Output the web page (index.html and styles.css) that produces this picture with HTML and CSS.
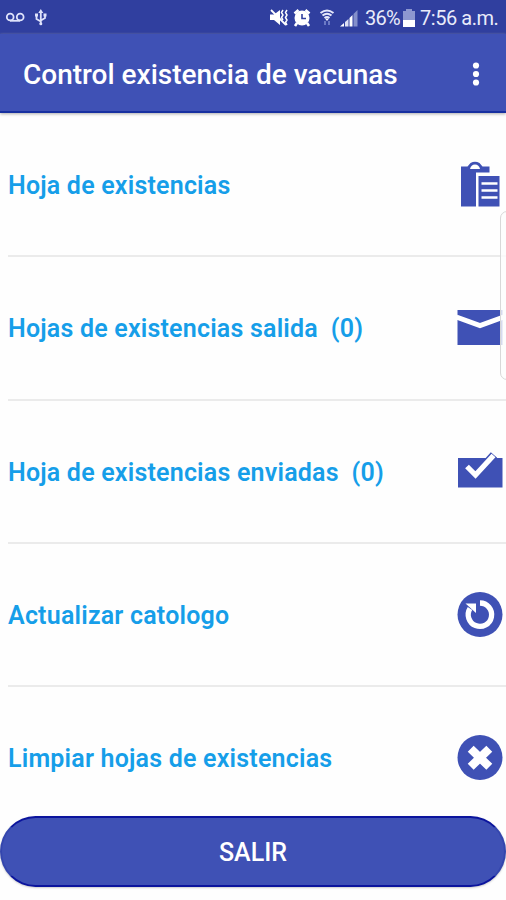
FILE: index.html
```html
<!DOCTYPE html>
<html lang="es">
<head>
<meta charset="utf-8">
<title>Control existencia de vacunas</title>
<link rel="stylesheet" href="styles.css">
</head>
<body>
<div class="screen">
  <div class="status">
    <svg class="status-left" viewBox="0 0 60 34" width="60" height="34" fill="none" stroke="#dfe3fb" stroke-width="1.8">
      <circle cx="10.2" cy="17" r="3.4"/><circle cx="20.2" cy="17" r="3.4"/><path d="M10 20.8h10"/>
      <path d="M40.8 24V11M36.500 15v4l4.300 2.500M45 14v4l-4.200 2.500"/><path d="M38.300 13l2.500-4 2.500 4zM35 13.500h3v3h-3zM43.500 13.500h3v3h-3z" fill="#dfe3fb" stroke="none"/><circle cx="40.800" cy="23.800" r="1.500" fill="#dfe3fb" stroke="none"/>
    </svg>
    <svg class="status-icons" viewBox="268 0 92 34" width="92" height="34">
      <path d="M270 14.500h4l6-4.500v15l-6-5h-4z" fill="#fff"/>
      <path d="M271 10l15 15" stroke="#fff" stroke-width="1.800"/>
      <path d="M283 10l-1.500 2.500 1.500 2.500-1.500 2.500 1.500 2.500M287 10l-1.500 2.500 1.500 2.500-1.500 2.500 1.500 2.500-1.500 2.500 1.500 2.500" fill="none" stroke="#fff" stroke-width="1.500"/>
      <circle cx="302" cy="18" r="7.500" fill="#fff"/>
      <path d="M294.500 13.500l4-3.500M309.500 13.500l-4-3.500M297 23l-2 3M307 23l2 3" stroke="#fff" stroke-width="2.600"/>
      <path d="M302 14v4.500h4" fill="none" stroke="#303f9f" stroke-width="1.600"/>
      <path d="M320.500 13q6.500-5 13 0M322.500 15.500q4.500-3.500 9 0M324.500 18q2.500-2 5 0" fill="none" stroke="#e4e7fa" stroke-width="2"/>
      <path d="M325 18.500h4l-2 2.500z" fill="#fff"/>
      <path d="M325 21v4M329 21v4" stroke="#7381ca" stroke-width="1.800"/>
      <path d="M340 26.500l4-3.500v3.500z" fill="#fff"/><path d="M345 22l3.500-3v7.500H345z" fill="#dde0f4"/><path d="M349.500 18l3-3v11.500h-3z" fill="#fff"/><path d="M353.500 14l4-4v16.500h-4z" fill="#8490cb"/>
    </svg>
    <span class="percent">36%</span>
    <svg class="battery" viewBox="0 0 12 18" width="12" height="18"><path d="M3 0h6v2h3v9H0V2h3z" fill="#8d97d0"/><path d="M0 11h12v7H0z" fill="#fff"/></svg>
    <span class="clock">7:56 a.m.</span>
  </div>
  <header class="bar">
    <h1 class="title">Control existencia de vacunas</h1>
    <svg class="more" viewBox="0 0 8 24" width="8" height="24" fill="#fff"><circle cx="4" cy="3.500" r="3.100"/><circle cx="4" cy="12" r="3.100"/><circle cx="4" cy="20.500" r="3.100"/></svg>
  </header>
  <main class="list">
    <div class="row"><span class="label">Hoja de existencias</span>
      <svg class="icon" viewBox="456 161 48 48"><path d="M461 166.500h6.500l3-3.500q4.500-2.500 9 0l3 3.500h7v6H476v34h-15z"/><path d="M470 169q1-4.500 5-4.500t5 4.500z" fill="#fff"/><path d="M478.500 176h21v30.500h-21z"/><path d="M481.500 183.500h16M481.500 190.500h16M481.500 197.500h16" stroke="#fff" stroke-width="2.500"/></svg>
    </div>
    <div class="row"><span class="label">Hojas de existencias salida&nbsp; (0)</span>
      <svg class="icon" viewBox="456 304 48 48"><path d="M457.500 310h45v35h-45z"/><path d="M456.500 317l23.500 8.500 23.500-8.500" fill="none" stroke="#fff" stroke-width="5"/></svg>
    </div>
    <div class="row"><span class="label">Hoja de existencias enviadas&nbsp; (0)</span>
      <svg class="icon" viewBox="456 448 48 48"><path d="M458 459h44.500v29.500H458z"/><path d="M466 467.500l9.500 9 18.500-20.500" fill="none" stroke="#3f51b5" stroke-width="8.500"/><path d="M467 467.500l8.500 8.500 18-19.500" fill="none" stroke="#fff" stroke-width="5.300"/></svg>
    </div>
    <div class="row"><span class="label">Actualizar catologo</span>
      <svg class="icon" viewBox="456 591 48 48"><circle cx="480" cy="614.500" r="22.500"/><path d="M480 603a11.700 11.700 0 1 1-10 5.500" fill="none" stroke="#fff" stroke-width="5.300"/><path d="M465.500 603.500h10.500v9.500z" fill="#fff"/></svg>
    </div>
    <div class="row"><span class="label">Limpiar hojas de existencias</span>
      <svg class="icon" viewBox="456 734 48 48"><circle cx="480" cy="757.500" r="22.500"/><path d="M470.700 748.700l18.600 18M489.300 748.700l-18.600 18" stroke="#fff" stroke-width="8.500"/></svg>
    </div>
  </main>
  <button class="exit">SALIR</button>
  <div class="edge"></div>
</div>
</body>
</html>
```
FILE: styles.css
```css
* { box-sizing: border-box; }
body { margin: 0; background: #fefefe; font-family: Roboto, sans-serif; }
.screen { position: relative; width: 506px; height: 900px; overflow: hidden; display: flex; flex-direction: column; }
.status { height: 34px; flex: none; display: flex; align-items: center; background: #303f9f; color: #e9ebfa; font-size: 20px; line-height: 34px; white-space: nowrap; }
.status svg { flex: none; }
.status-left { margin-right: auto; }
.percent { width: 38px; margin: 2px 0 0 5px; letter-spacing: -.8px; }
.battery { margin: 2px 4px 0 0; }
.clock { width: 80px; margin: 2px 6px 0 1px; letter-spacing: -.45px; }
.bar { height: 79px; flex: none; display: flex; align-items: center; justify-content: space-between; padding: 2px 26px 0 23px; background: #3f51b5; border-bottom: 2px solid #1730a0; box-shadow: 0 1px 3px #aaa; }
.title { margin: 2px 0 0; color: #fff; font-size: 28px; font-weight: 500; white-space: nowrap; }
.more { margin-top: 1px; }
.list { flex: none; height: 703px; padding-top: 1px; overflow: hidden; }
.row { height: 143.3px; margin-left: 8px; padding-right: 2px; display: flex; align-items: center; justify-content: space-between; border-bottom: 2px solid #ebebeb; }
.row:last-child { border-bottom-color: transparent; }
.label { padding-top: 2px; color: #169ee9; font-size: 25px; font-weight: 600; letter-spacing: .2px; white-space: nowrap; }
.icon { width: 48px; height: 48px; flex: none; fill: #3f51b5; }
.exit { height: 71px; width: 506px; margin: 0; padding-top: 3px; flex: none; border: 2px solid #0b149d; border-left-color: #3446ae; border-right-color: #3446ae; border-radius: 36px; background: #3f51b5; color: #fff; font: 500 25px Roboto, sans-serif; box-shadow: 0 1px 2px #ccc; }
.edge { position: absolute; left: 500px; top: 211px; width: 14px; height: 169px; background: rgba(253, 253, 253, .8); border: 1px solid #d8d8d8; border-radius: 8px; }
```
